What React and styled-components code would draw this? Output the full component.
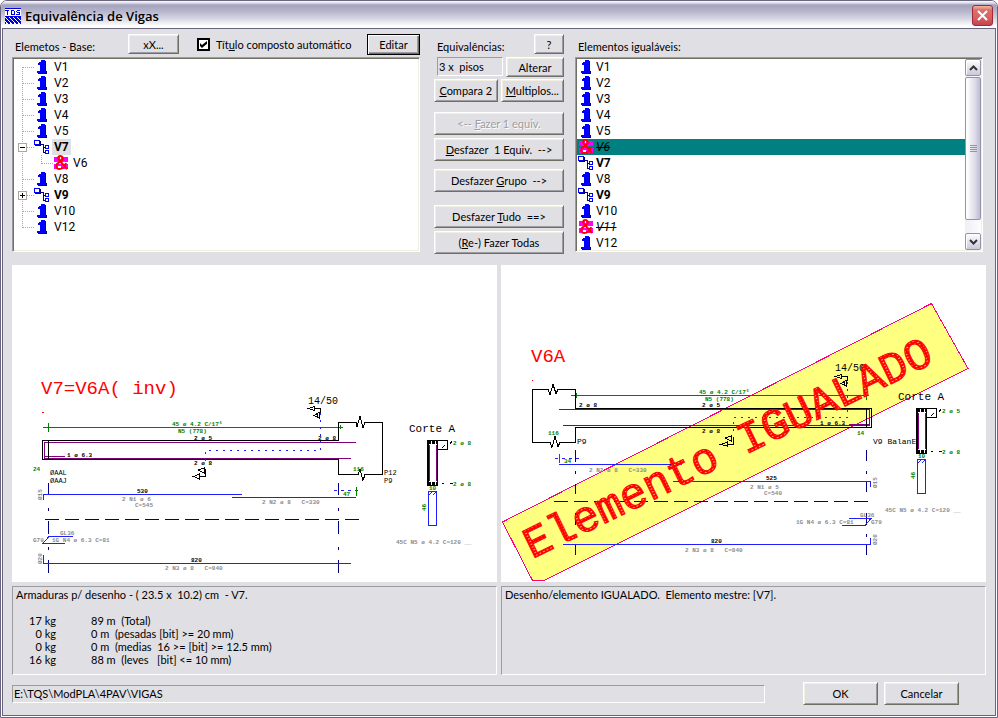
import React, { useState } from "react";
import styled, { createGlobalStyle, css } from "styled-components";

const GlobalStyle = createGlobalStyle`
  * {
    box-sizing: border-box;
  }

  body {
    margin: 0;
    background-color: #ffffff;
    color: #000000;
    font-family: Lato, "Liberation Sans", Arial, sans-serif;
    font-size: 11px;
    line-height: 13px;
  }

  button, input {
    font: inherit;
    color: inherit;
  }
`;

// Window frame

const Window = styled.div`
  display: flex;
  flex-direction: column;
  min-height: 100vh;
  border: 1px solid #69657f;
  border-radius: 7px 7px 0 0;
  background-color: #ffffff;
  overflow: hidden;
`;

const TitleBar = styled.header`
  display: flex;
  align-items: center;
  gap: 4px;
  height: 27px;
  padding: 2px 4px 0 4px;
  background: linear-gradient(
    #ffffff 0px,
    #dcdbe6 2px,
    #a5a4be 4px,
    #b1b0c8 9px,
    #d3d3e0 17px,
    #ffffff 25px,
    #ffffff 27px
  );
`;

const Title = styled.h1`
  flex: 1;
  margin: 0;
  font-family: "Open Sans", "Noto Sans", sans-serif;
  font-size: 13px;
  line-height: 18px;
  font-weight: 600;
`;

const CloseButton = styled.button`
  width: 21px;
  height: 21px;
  padding: 0;
  border: 1px solid #a0293c;
  border-radius: 3px;
  background: linear-gradient(#f0b9a0 0px, #dd6f6c 4px, #d9605f 12px, #c24450 19px);

  svg {
    display: block;
    margin: 3px;
  }
`;

const Body = styled.main`
  flex: 1;
  display: flex;
  flex-direction: column;
  margin: 0 1px 1px;
  padding: 0 9px 10px;
  border: 1px solid #69657f;
  background-color: #e0dfe3;
`;

// Shared controls

const Button = styled.button`
  flex: ${(props) => (props.$grow ? "1" : "none")};
  width: ${(props) => props.$width || "auto"};
  height: ${(props) => (props.$small ? "20px" : "23px")};
  padding: 0;
  border: 1px solid;
  border-color: #ffffff #716f64 #716f64 #ffffff;
  background-color: #e0dfe3;
  box-shadow: inset 1px 1px #f1efe2, inset -1px -1px #9d9da1;
  white-space: pre;

  &:disabled {
    color: #9d9da1;
    text-shadow: 1px 1px #ffffff;
  }
`;

const DefaultButton = styled(Button)`
  height: 21px;
  margin-left: auto;
  border-color: #000000;
  box-shadow: inset 1px 1px #ffffff, inset -1px -1px #716f64, inset -2px -2px #9d9da1;
`;

const sunken = css`
  border: 1px solid;
  border-color: #9d9da1 #ffffff #ffffff #9d9da1;
`;

// Upper part: lists and commands

const Lists = styled.section`
  display: grid;
  grid-template-columns: minmax(0, 1fr) 155px minmax(0, 1fr);
  padding-right: 3px;
`;

const Column = styled.div`
  display: flex;
  flex-direction: column;
  min-width: 0;
`;

const Header = styled.div`
  display: flex;
  align-items: flex-start;
  height: 28px;
  padding-top: 3px;

  & > ${Button} {
    margin-top: 2px;
  }
`;

const Caption = styled.span`
  flex: none;
  width: ${(props) => props.$width || "auto"};
  margin-top: 8px;
  padding-left: 3px;
`;

const CheckLabel = styled.label`
  display: flex;
  align-items: center;
  gap: 6px;
  margin: 6px 0 0 18px;
`;

const CheckBox = styled.input`
  appearance: none;
  width: 13px;
  height: 13px;
  margin: 0;
  border: 2px solid #000000;
  background-color: #ffffff;

  &:checked::before {
    content: "";
    display: block;
    width: 7px;
    height: 7px;
    margin: 1px;
    background-color: #000000;
    clip-path: polygon(0 28%, 28% 57%, 100% 0, 100% 38%, 28% 100%, 0 70%);
  }
`;

const ListFrame = styled.div`
  ${sunken}
  display: flex;
  height: 195px;
  background-color: #ffffff;
  box-shadow: inset 1px 1px #716f64, inset -1px -1px #f1efe2;
  padding: 1px;
`;

const Items = styled.ul`
  flex: 1;
  min-width: 0;
  margin: 0;
  padding: 0;
  list-style: none;
  overflow: hidden;
`;

const Item = styled.li`
  display: flex;
  align-items: center;
  height: 16px;
  padding-left: ${(props) => (props.$flat ? "1px" : "0")};
  background-color: ${(props) => (props.$selected ? "#008080" : "transparent")};

  svg {
    flex: none;
    display: block;
  }
`;

const ItemLabel = styled.span`
  margin-left: ${(props) => (props.$flat ? "0" : "2px")};
  padding: 0 2px;
  font-family: Roboto, "Liberation Sans", sans-serif;
  font-size: 12px;
  line-height: 16px;
  font-weight: ${(props) => (props.$bold ? "bold" : "normal")};
  background-color: ${(props) => (props.$marked ? "#e0dfe3" : "transparent")};
  ${(props) =>
    props.$struck &&
    css`
      font-style: italic;
      text-decoration: line-through;
    `}
`;

const Expander = styled.button`
  padding: 0;
  border: 0;
  background: none;
`;

const ScrollBar = styled.div`
  display: flex;
  flex-direction: column;
  width: 16px;
  background: linear-gradient(90deg, #eeeef5, #fdfdff);
`;

const ScrollButton = styled.button`
  flex: none;
  height: 17px;
  padding: 0;
  border: 1px solid #9593a8;
  border-radius: 2px;
  background: linear-gradient(#ffffff, #c9c8da);
  box-shadow: inset 1px 1px #ffffff;

  svg {
    display: block;
    margin: 0 auto;
  }
`;

const Thumb = styled.div`
  display: flex;
  flex-direction: column;
  align-items: center;
  justify-content: center;
  gap: 1px;
  height: 143px;
  margin: 1px 0 auto;
  border: 1px solid #9593a8;
  border-radius: 2px;
  background: linear-gradient(90deg, #ffffff 1px, #ecebf3 5px, #dcdbe8 9px, #c3c2d6 13px);

  i {
    width: 7px;
    height: 1px;
    background-color: #9593a8;
  }
`;

const Commands = styled(Column)`
  padding: 0 11px 0 14px;
`;

const CommandRow = styled.div`
  display: flex;
  gap: 3px;
  margin-top: ${(props) => props.$top || "0"};
`;

const Floors = styled.input`
  ${sunken}
  flex: none;
  width: 66px;
  height: 19px;
  margin-left: 3px;
  padding: 0 1px;
  background-color: #e0dfe3;
`;

// Lower part: drawings and reports

const Panels = styled.section`
  display: grid;
  grid-template-columns: repeat(2, minmax(0, 1fr));
  gap: 4px;
  margin-top: 11px;
`;

const Drawing = styled.svg`
  display: block;
  width: 100%;
  height: auto;
  background-color: #ffffff;
  shape-rendering: crispEdges;
  fill: none;
  stroke-width: 1;
`;

const Note = styled.text`
  stroke: none;
  fill: ${(props) => props.$color || "#000000"};
  font-family: "Liberation Mono", "Courier New", monospace;
  font-size: ${(props) => props.$size || "6px"};
  font-weight: ${(props) => (props.$size ? "normal" : "bold")};
  white-space: pre;
`;

const Stamp = styled(Note)`
  stroke: #ff0000;
  stroke-width: 1px;
`;

const Report = styled.div`
  ${sunken}
  min-height: 89px;
  padding: 1px 3px;
  white-space: pre;
`;

const Amounts = styled.table`
  margin-top: 13px;
  border-collapse: collapse;

  td {
    padding: 0;
    height: 13px;
  }

  td:first-child {
    width: 40px;
    text-align: right;
  }

  td:last-child {
    padding-left: 35px;
  }
`;

const Footer = styled.footer`
  display: flex;
  align-items: center;
  gap: 6px;
  margin-top: 7px;
  padding-right: 27px;
`;

const Path = styled.input`
  ${sunken}
  flex: 1;
  min-width: 0;
  height: 18px;
  margin-right: 32px;
  padding: 0 1px;
  background-color: #e0dfe3;
`;

// Icons

function AppIcon() {
  return (
    <svg width="16" height="16" viewBox="0 0 16 16" shapeRendering="crispEdges">
      <rect width="16" height="16" fill="#fff" />
      <path d="M0 0h16v1H0zM0 8h16v1H0z" fill="#0000e8" />
      <path
        d="M0 2.500h4M2.500 2v5M6 3v3M6 2.500h3M9.500 3v4M6 6.500h3M12 2.500h3M11.500 3v1M12 4.500h3M14.500 5v2M11 6.500h3"
        stroke="#0000e8"
        fill="none"
      />
      <path
        d="M-2 9l7 7M2 9l7 7M6 9l7 7M10 9l7 7M14 9l3 3M-2 13l3 3"
        stroke="#0000e8"
        strokeWidth="2"
      />
    </svg>
  );
}

function OneIcon() {
  return (
    <svg width="16" height="16" viewBox="0 0 16 16" shapeRendering="crispEdges">
      <path d="M7 2h5v10h1v3H4v-1h7V2z" fill="#000080" />
      <path d="M7 1h4v11h1v2H3v-2h3V6H4V4h1V3h2z" fill="#0000ff" />
    </svg>
  );
}

function GroupIcon() {
  return (
    <svg width="16" height="16" viewBox="0 0 16 16" shapeRendering="crispEdges" fill="#fff">
      <path d="M6 5.500h3.500v8H11M9 8.500h2" stroke="#000080" fill="none" />
      <path d="M1 6.500h5.500V2" stroke="#000080" fill="none" />
      <rect x="0.500" y="1.500" width="5" height="4" stroke="#0000ff" />
      <rect x="11.500" y="6.500" width="3" height="3" stroke="#0000ff" />
      <rect x="11.500" y="11.500" width="3" height="3" stroke="#0000ff" />
    </svg>
  );
}

function EqualIcon() {
  return (
    <svg width="16" height="16" viewBox="0 0 16 16">
      <path d="M1 2h14v5H1zM1 9h14v5H1z" fill="#ff00ff" />
      <path
        d="M14 14L6 5C4 2 6 1 7.500 1S11 3 9 5L4 9C2 12 4 14 6 14C9 14 12 12 13 8"
        stroke="#ff0000"
        strokeWidth="2"
        fill="none"
      />
      <path d="M7 2h1v2H7zM5 11h3v2H5z" fill="#ffffff" />
    </svg>
  );
}

function Branch({ first, last, box, child }) {
  const top = first ? 8 : 0;
  const bottom = last ? 9 : 16;

  return (
    <svg width={child ? 39 : 20} height="16" shapeRendering="crispEdges" fill="none">
      <path d={`M8.500 ${top}V${bottom}`} stroke="#aca899" strokeDasharray="1 1" />
      {!child && <path d="M9 8.500h11" stroke="#aca899" strokeDasharray="1 1" />}
      {child && <path d="M27.500 0v9M28 8.500h11" stroke="#aca899" strokeDasharray="1 1" />}
      {box && (
        <g>
          <rect x="4.500" y="4.500" width="8" height="8" fill="#fff" stroke="#aca899" />
          <path d={box === "open" ? "M6 8.500h5" : "M6 8.500h5M8.500 6v5"} stroke="#000" />
        </g>
      )}
    </svg>
  );
}

const icons = { one: OneIcon, group: GroupIcon, equal: EqualIcon };

const treeItems = [
  { name: "V1", icon: "one" },
  { name: "V2", icon: "one" },
  { name: "V3", icon: "one" },
  { name: "V4", icon: "one" },
  { name: "V5", icon: "one" },
  { name: "V7", icon: "group", children: ["V6"] },
  { name: "V8", icon: "one" },
  { name: "V9", icon: "group", children: ["V11"] },
  { name: "V10", icon: "one" },
  { name: "V12", icon: "one" },
];

const flatItems = [
  { name: "V1", icon: "one" },
  { name: "V2", icon: "one" },
  { name: "V3", icon: "one" },
  { name: "V4", icon: "one" },
  { name: "V5", icon: "one" },
  { name: "V6", icon: "equal" },
  { name: "V7", icon: "group" },
  { name: "V8", icon: "one" },
  { name: "V9", icon: "group" },
  { name: "V10", icon: "one" },
  { name: "V11", icon: "equal" },
  { name: "V12", icon: "one" },
];

const amounts = [
  ["17 kg", "89 m  (Total)"],
  ["0 kg", "0 m  (pesadas [bit] >= 20 mm)"],
  ["0 kg", "0 m  (medias  16 >= [bit] >= 12.5 mm)"],
  ["16 kg", "88 m  (leves   [bit] <= 10 mm)"],
];

function Tree() {
  const [open, setOpen] = useState({ V7: true });

  return (
    <Items role="tree" aria-label="Elementos base">
      {treeItems.map((item, index) => {
        const Icon = icons[item.icon];
        return (
          <React.Fragment key={item.name}>
            <Item role="treeitem">
              {item.children ? (
                <Expander
                  aria-label={item.name}
                  onClick={() => setOpen({ ...open, [item.name]: !open[item.name] })}
                >
                  <Branch box={open[item.name] ? "open" : "closed"} />
                </Expander>
              ) : (
                <Branch first={index === 0} last={index === treeItems.length - 1} />
              )}
              <Icon />
              <ItemLabel $bold={item.icon === "group"} $marked={item.name === "V7"}>
                {item.name}
              </ItemLabel>
            </Item>
            {item.children && open[item.name] &&
              item.children.map((child) => (
                <Item role="treeitem" key={child}>
                  <Branch child />
                  <EqualIcon />
                  <ItemLabel>{child}</ItemLabel>
                </Item>
              ))}
          </React.Fragment>
        );
      })}
    </Items>
  );
}

function FlatList() {
  const [selected, setSelected] = useState("V6");

  return (
    <Items role="listbox" aria-label="Elementos igualáveis">
      {flatItems.map((item) => {
        const Icon = icons[item.icon];
        return (
          <Item
            key={item.name}
            role="option"
            aria-selected={selected === item.name}
            $flat
            $selected={selected === item.name}
            onClick={() => setSelected(item.name)}
          >
            <Icon />
            <ItemLabel $flat $bold={item.icon === "group"} $struck={item.icon === "equal"}>
              {item.name}
            </ItemLabel>
          </Item>
        );
      })}
    </Items>
  );
}

// Drawing colours

const GREEN = "#008000";
const GRAY = "#8c8c8c";
const BLUE = "#2020ff";
const NAVY = "#000080";
const PURPLE = "#800080";
const RED = "#ff0000";

// Section mark: small triangle and a sideways A
function CutMark({ x, y }) {
  return (
    <g transform={`translate(${x} ${y})`}>
      <path d="M12.500 7V2.500H6M6 0.500v4L0.500 2.500z" stroke="#000" />
      <path d="M6 9.500l5-3v5.500zM9 8v3" stroke="#000" />
    </g>
  );
}

// Cross section of the beam with its stirrup
function CrossSection({ x, y, top }) {
  return (
    <g transform={`translate(${x} ${y})`}>
      <Note x="-18" y="-8" $size="11px">Corte A</Note>
      <rect x="0.500" y="0.500" width="10" height="45" stroke="#000" />
      <path d="M1.500 1v45" stroke="#000" />
      <path d="M1 2.500h9M1 43.500h9" stroke="#000" strokeWidth="3" strokeDasharray="3 1" />
      <path d="M2.500 5v36M9.500 5v36" stroke={PURPLE} />
      <path d="M11 0.500h9.500v9H11M15 8l3-3M23 4l2-3M15 43.500h2M23 43.500h3" stroke="#000" />
      <Note x="26" y="5" $color={GREEN}>{`2 ø ${top}`}</Note>
      <Note x="26" y="46" $color={GREEN}>2 ø 8</Note>
      <Note x="2" y="50" $color={GREEN}>10</Note>
      <rect x="1.500" y="51.500" width="8" height="34" stroke={BLUE} />
      <path d="M2 55l3-3M6 55l3-3" stroke={BLUE} />
      <Note transform="translate(-1 71) rotate(-90)" $color={GREEN}>46</Note>
      <Note x="-31" y="104" $color={GRAY}>45C N5 ø 4.2 C=120 __</Note>
    </g>
  );
}

function BaseDrawing() {
  return (
    <Drawing viewBox="12 265 485 317" role="img" aria-label="Viga V7">
      <Note x="41" y="394" $size="19px" $color={RED}>V7=V6A( inv)</Note>
      <path d="M42 412.500h2" stroke={RED} />

      <path d="M43 427.500h300M48.500 423v9M340.500 425v4" stroke={GREEN} />
      <Note x="172" y="426" $color={GREEN}>45 ø 4.2 C/17⁵</Note>
      <Note x="178" y="433" $color={GREEN}>N5 (778)</Note>

      <path d="M44 442.500h312M44 458.500h307M44 456.500h21M44.500 443v15" stroke={PURPLE} />
      <path d="M339 440.500H42.500v19H339M48.500 440v19" stroke="#000" />
      <path
        d="M338.500 441v-18.500H356l1 4 3-10 3 11 2-5h17.500v52H365l-2 6-3-11-2 5H338.500V459"
        stroke="#000"
      />
      <path d="M320.500 413v37.500H205.500V465" stroke={BLUE} strokeDasharray="2 5" />
      <Note x="67" y="457">1 ø 6.3</Note>
      <Note x="194" y="440">2 ø 5</Note>
      <Note x="194" y="465">2 ø 8</Note>
      <Note x="318" y="440">2 ø 8</Note>
      <Note x="308" y="404" $size="10px">14/50</Note>
      <CutMark x="308" y="406" />
      <path d="M193.500 476.500l6-2.500v5zM199 476.500h6.500V469M198 470l6-2v5z" stroke="#000" />

      <Note x="33" y="471" $color={GREEN}>24</Note>
      <Note x="50" y="475" $size="7px">ØAAL</Note>
      <Note x="50" y="483" $size="7px">ØAAJ</Note>
      <Note x="353" y="471" $color={GREEN}>116</Note>
      <Note x="384" y="475" $size="7px">P12</Note>
      <Note x="384" y="483" $size="7px">P9</Note>

      <path d="M334 490.500h28" stroke={BLUE} strokeDasharray="3 4" />
      <path d="M338.500 487v8M356.500 487v9" stroke={GREEN} />
      <Note x="343" y="496" $color={GREEN}>47</Note>

      <path
        d="M48.500 483v12M48.500 508v3M48.500 521v13M48.500 547v3M48.500 560v13M338.500 483v12M338.500 508v3M338.500 521v13M338.500 547v3M338.500 560v13"
        stroke={NAVY}
      />
      <path d="M45 519.500h315" stroke={NAVY} strokeDasharray="14 6" />

      <path d="M43.500 500v-5.500H242M232 497.500h124" stroke={BLUE} />
      <Note transform="translate(42 500) rotate(-90)" $color={GRAY}>Ø15</Note>
      <Note x="137" y="493">530</Note>
      <Note x="122" y="501" $color={GRAY}>2 N1 ø 6</Note>
      <Note x="135" y="507" $color={GRAY}>C=545</Note>
      <Note x="262" y="504" $color={GRAY}>{"2 N2 ø 8   C=330"}</Note>

      <path d="M73 536.500H49l-6 7h22" stroke={BLUE} />
      <Note x="60" y="535" $color={GRAY}>GL36</Note>
      <Note x="33" y="542" $color={GRAY}>G79</Note>
      <Note x="52" y="542" $color={GRAY}>1G N4 ø 6.3 C=81</Note>

      <path d="M43.500 555v8.500H351" stroke={BLUE} />
      <Note transform="translate(42 564) rotate(-90)" $color={GRAY}>Ø20</Note>
      <Note x="191" y="562">820</Note>
      <Note x="165" y="570" $color={GRAY}>{"2 N3 ø 8   C=840"}</Note>

      <CrossSection x="427" y="440" top="8" />
    </Drawing>
  );
}

function EqualDrawing() {
  return (
    <Drawing viewBox="501 265 485 317" role="img" aria-label="Viga V6A">
      <defs>
        <pattern id="hatch" width="4" height="3" patternUnits="userSpaceOnUse">
          <rect width="4" height="3" fill={RED} />
          <rect x="1" y="1" width="2" height="1" fill="#ffb070" />
        </pattern>
      </defs>
      <path
        d="M502.500 522L931.500 303.500L968 368.500L544 580.500H532.500z"
        fill="#ffff80"
        stroke="#ff0080"
      />

      <Note x="531" y="362" $size="19px" $color={RED}>V6A</Note>
      <path d="M532 380.500h1" stroke={RED} />

      <path d="M571 395.500h298M576.500 393v5M866.500 391v9" stroke={GREEN} />
      <Note x="699" y="394" $color={GREEN}>45 ø 4.2 C/17⁵</Note>
      <Note x="705" y="401" $color={GREEN}>N5 (778)</Note>

      <path d="M559 409.500h311M563 425.500h307M849 424.500h21M869.500 410v15" stroke={PURPLE} />
      <path d="M575 408.500h296.500v19H575M866.500 408v19" stroke="#000" />
      <path
        d="M575.500 409v-19.500H558l-2 4-3-9-3 10-2-5h-15.500v53H550l2 5 3-11 3 10 2-4h15.500V427"
        stroke="#000"
      />
      <path d="M847.500 382v35.500H733.500V432" stroke={BLUE} strokeDasharray="2 5" />
      <Note x="579" y="407">2 ø 8</Note>
      <Note x="702" y="407">2 ø 5</Note>
      <Note x="702" y="433">2 ø 8</Note>
      <Note x="820" y="425">1 ø 6.3</Note>
      <Note x="835" y="371" $size="10px">14/50</Note>
      <CutMark x="835" y="374" />
      <path d="M720.500 444.500l7-2.500v4zM727 444.500h6.500V437M725 438l6-2v5z" stroke="#000" />

      <Note x="577" y="444" $size="8px">P9</Note>
      <Note x="548" y="435" $color={GREEN}>116</Note>
      <Note x="857" y="435" $color={GREEN}>14</Note>
      <Note x="873" y="444" $size="8px">V9 BalanE</Note>

      <path d="M555 458.500h27" stroke={BLUE} strokeDasharray="3 4" />
      <path d="M559.500 454v9M575.500 455v7" stroke={GREEN} />
      <Note x="564" y="463" $color={GREEN}>34</Note>

      <path
        d="M575.500 450v12M575.500 471v3M575.500 484v10M575.500 513v12M575.500 534v3M575.500 545v10M866.500 450v11M866.500 471v3M866.500 481v11M866.500 513v12M866.500 534v3M866.500 545v10"
        stroke={NAVY}
      />
      <path d="M554 501.500h314" stroke={NAVY} strokeDasharray="14 6" />

      <path d="M559 464.500h123M673 481.500h197.500V487" stroke={BLUE} />
      <Note x="589" y="472" $color={GRAY}>{"2 N2 ø 8   C=330"}</Note>
      <Note x="766" y="480">525</Note>
      <Note x="750" y="489" $color={GRAY}>2 N1 ø 5</Note>
      <Note x="764" y="495" $color={GRAY}>C=540</Note>
      <Note transform="translate(877 488) rotate(-90)" $color={GRAY}>Ø15</Note>

      <path d="M849 518.500h22l-6 7h-23" stroke={BLUE} />
      <Note x="860" y="517" $color={GRAY}>GL36</Note>
      <Note x="796" y="524" $color={GRAY}>1G N4 ø 6.3 C=81</Note>
      <Note x="871" y="524" $color={GRAY}>G79</Note>

      <path d="M563 544.500h307.500V538" stroke={BLUE} />
      <Note transform="translate(877 545) rotate(-90)" $color={GRAY}>Ø20</Note>
      <Note x="711" y="543">820</Note>
      <Note x="685" y="552" $color={GRAY}>{"2 N3 ø 8   C=840"}</Note>

      <CrossSection x="916" y="408" top="5" />

      <Stamp transform="translate(532 559) rotate(-26)" $size="44px" $color="url(#hatch)">
        Elemento IGUALADO
      </Stamp>
    </Drawing>
  );
}

export default function App() {
  return (
    <>
      <GlobalStyle />
      <Window>
        <TitleBar>
          <AppIcon />
          <Title>Equivalência de Vigas</Title>
          <CloseButton aria-label="Fechar">
            <svg width="13" height="13" viewBox="0 0 13 13">
              <path d="M2 2l9 9M11 2l-9 9" stroke="#fff" strokeWidth="2" />
            </svg>
          </CloseButton>
        </TitleBar>

        <Body>
          <Lists>
            <Column>
              <Header>
                <Caption $width="116px">Elemetos - Base:</Caption>
                <Button $small $width="51px">xX...</Button>
                <CheckLabel>
                  <CheckBox type="checkbox" defaultChecked />
                  <span>Tít<u>u</u>lo composto automático</span>
                </CheckLabel>
                <DefaultButton $width="53px">Editar</DefaultButton>
              </Header>
              <ListFrame>
                <Tree />
              </ListFrame>
            </Column>

            <Commands>
              <Header>
                <Caption $width="100px">Equivalências:</Caption>
                <Button $small $grow>?</Button>
              </Header>
              <CommandRow>
                <Floors aria-label="Pisos" defaultValue="3 x  pisos" readOnly />
                <Button $small $grow>Alterar</Button>
              </CommandRow>
              <CommandRow $top="2px">
                <Button $grow><u>C</u>ompara 2</Button>
                <Button $grow><u>M</u>ultiplos...</Button>
              </CommandRow>
              <CommandRow $top="10px">
                <Button $grow disabled>&lt;-- <u>F</u>azer 1 equiv.</Button>
              </CommandRow>
              <CommandRow $top="3px">
                <Button $grow><u>D</u>esfazer{"  1 Equiv.  -->"}</Button>
              </CommandRow>
              <CommandRow $top="8px">
                <Button $grow>Desfazer <u>G</u>rupo{"  -->"}</Button>
              </CommandRow>
              <CommandRow $top="13px">
                <Button $grow>Desfazer <u>T</u>udo{"  ==>"}</Button>
              </CommandRow>
              <CommandRow $top="3px">
                <Button $grow>(<u>R</u>e-) Fazer Todas</Button>
              </CommandRow>
            </Commands>

            <Column>
              <Header>
                <Caption>Elementos igualáveis:</Caption>
              </Header>
              <ListFrame>
                <FlatList />
                <ScrollBar>
                  <ScrollButton aria-label="Subir">
                    <svg width="9" height="6" viewBox="0 0 9 6">
                      <path d="M1 5l3.500-3.500L8 5" stroke="#333" strokeWidth="2" fill="none" />
                    </svg>
                  </ScrollButton>
                  <Thumb>
                    <i />
                    <i />
                    <i />
                    <i />
                  </Thumb>
                  <ScrollButton aria-label="Descer">
                    <svg width="9" height="6" viewBox="0 0 9 6">
                      <path d="M1 1l3.500 3.500L8 1" stroke="#333" strokeWidth="2" fill="none" />
                    </svg>
                  </ScrollButton>
                </ScrollBar>
              </ListFrame>
            </Column>
          </Lists>

          <Panels>
            <BaseDrawing />
            <EqualDrawing />
            <Report>
              {"Armaduras p/ desenho - ( 23.5 x  10.2) cm  - V7."}
              <Amounts>
                <tbody>
                  {amounts.map(([weight, length]) => (
                    <tr key={length}>
                      <td>{weight}</td>
                      <td>{length}</td>
                    </tr>
                  ))}
                </tbody>
              </Amounts>
            </Report>
            <Report>{"Desenho/elemento IGUALADO.  Elemento mestre: [V7]."}</Report>
          </Panels>

          <Footer>
            <Path aria-label="Pasta" defaultValue="E:\TQS\ModPLA\4PAV\VIGAS" readOnly />
            <Button $width="75px">OK</Button>
            <Button $width="75px">Cancelar</Button>
          </Footer>
        </Body>
      </Window>
    </>
  );
}
